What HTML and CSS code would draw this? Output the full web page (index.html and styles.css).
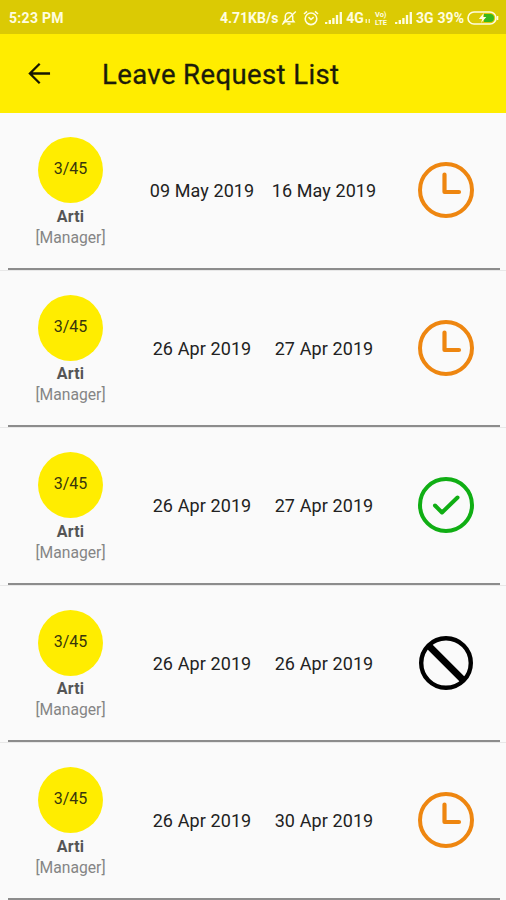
FILE: index.html
```html
<!DOCTYPE html>
<html lang="en">
<head>
    <meta charset="UTF-8">
    <meta name="viewport" content="width=device-width, initial-scale=1.0">
    <title>Leave Request List</title>
    <link rel="stylesheet" href="styles.css">
</head>
<body>
    <!-- Shared icons -->
    <svg class="sprite" width="0" height="0">
        <symbol id="pending" viewBox="0 0 56 56">
            <circle cx="28" cy="28" r="26" fill="none" stroke="#ee8610" stroke-width="4"/>
            <path d="M26.5 12.5V30H41" fill="none" stroke="#ee8610" stroke-width="4.2" stroke-linecap="round" stroke-linejoin="round"/>
        </symbol>
        <symbol id="approved" viewBox="0 0 56 56">
            <circle cx="28" cy="28" r="26" fill="none" stroke="#10ae14" stroke-width="4"/>
            <path d="M17 28.5L24 35.5L39.5 20.5" fill="none" stroke="#10ae14" stroke-width="4" stroke-linecap="round" stroke-linejoin="round"/>
        </symbol>
        <symbol id="rejected" viewBox="0 0 56 56">
            <circle cx="28" cy="28" r="24.8" fill="none" stroke="#000" stroke-width="4.4"/>
            <path d="M11 11L45 45" stroke="#000" stroke-width="6.8"/>
        </symbol>
        <symbol id="signal" viewBox="0 0 18 14">
            <path d="M1.2 11v2M4.8 9v4M8.4 7v6M12 4v9M15.8 1v12" stroke="#fffde0" stroke-width="2.3"/>
        </symbol>
    </svg>

    <div class="status-bar">
        <span class="time">5:23 PM</span>
        <div class="indicators">
            <span class="speed">4.71KB/s</span>
            <svg class="bell" viewBox="0 0 16 16" fill="none" stroke="#fffde0" stroke-width="1.5">
                <path d="M3 11.8L4.3 10V6.5a3.7 3.7 0 0 1 7.4 0V10L13 11.8zM6.5 14h3M1.2 14.5L14.8 1.5"/>
            </svg>
            <svg class="alarm" viewBox="0 0 16 16" fill="none" stroke="#fffde0" stroke-width="1.6">
                <circle cx="8" cy="8.8" r="5.8"/>
                <path d="M1 4L4 1.3M15 4L12 1.3M5.5 7.2L8 9.5L10.7 7.2"/>
            </svg>
            <svg class="signal"><use href="#signal"/></svg>
            <span class="network-4g">4G</span>
            <svg class="data" viewBox="0 0 6 6"><path d="M1.2 1v4M4.2 1v4" stroke="#fffde0" stroke-width="1.2"/></svg>
            <span class="volte"><span>Vo)</span><span>LTE</span></span>
            <svg class="signal second"><use href="#signal"/></svg>
            <span class="network-3g">3G</span>
            <span class="percent">39%</span>
            <svg class="battery" viewBox="0 0 32 14">
                <rect x="1" y="1" width="28" height="12" rx="6" fill="none" stroke="#fffde0" stroke-width="1.6"/>
                <path d="M17 3h6a4 4 0 0 1 0 8h-6z" fill="#38b81c"/>
                <path d="M16.8 2L11.8 8h3.5L14 12l5.3-6H16z" fill="#fffde0"/>
                <path d="M30.5 5v4" stroke="#fffde0" stroke-width="1.6"/>
            </svg>
        </div>
    </div>

    <header class="toolbar">
        <svg class="back" viewBox="0 0 24 24" fill="none" stroke="#171700" stroke-width="2.4">
            <path d="M23 12H2.5M12.2 1.8L2 12L12.2 22.2"/>
        </svg>
        <h1>Leave Request List</h1>
    </header>

    <main class="list">
        <div class="row">
            <div class="person">
                <div class="badge">3/45</div>
                <div class="name">Arti</div>
                <div class="role">[Manager]</div>
            </div>
            <div class="date">09 May 2019</div>
            <div class="date">16 May 2019</div>
            <svg class="state"><use href="#pending"/></svg>
        </div>
        <div class="row">
            <div class="person">
                <div class="badge">3/45</div>
                <div class="name">Arti</div>
                <div class="role">[Manager]</div>
            </div>
            <div class="date">26 Apr 2019</div>
            <div class="date">27 Apr 2019</div>
            <svg class="state"><use href="#pending"/></svg>
        </div>
        <div class="row">
            <div class="person">
                <div class="badge">3/45</div>
                <div class="name">Arti</div>
                <div class="role">[Manager]</div>
            </div>
            <div class="date">26 Apr 2019</div>
            <div class="date">27 Apr 2019</div>
            <svg class="state"><use href="#approved"/></svg>
        </div>
        <div class="row">
            <div class="person">
                <div class="badge">3/45</div>
                <div class="name">Arti</div>
                <div class="role">[Manager]</div>
            </div>
            <div class="date">26 Apr 2019</div>
            <div class="date">26 Apr 2019</div>
            <svg class="state"><use href="#rejected"/></svg>
        </div>
        <div class="row">
            <div class="person">
                <div class="badge">3/45</div>
                <div class="name">Arti</div>
                <div class="role">[Manager]</div>
            </div>
            <div class="date">26 Apr 2019</div>
            <div class="date">30 Apr 2019</div>
            <svg class="state"><use href="#pending"/></svg>
        </div>
    </main>
</body>
</html>
```
FILE: styles.css
```css
* {
    box-sizing: border-box;
}
body {
    margin: 0;
    height: 900px;
    overflow: hidden;
    background-color: #fafafa;
    font-family: Roboto, "Liberation Sans", sans-serif;
}
svg {
    display: block;
    flex: none;
}
.sprite {
    position: absolute;
}
.status-bar {
    display: flex;
    justify-content: space-between;
    align-items: center;
    height: 34px;
    padding: 2px 7px 0 9px;
    background-color: #dbca04;
    color: #fffde0;
    font-size: 14px;
    font-weight: 700;
    white-space: nowrap;
}
.time {
    letter-spacing: 0.3px;
}
.indicators {
    display: flex;
    align-items: center;
}
.bell {
    width: 16px;
    height: 16px;
    margin-left: 3px;
}
.alarm {
    width: 16px;
    height: 16px;
    margin-left: 6px;
}
.signal {
    width: 18px;
    height: 14px;
    margin-left: 6px;
}
.network-4g {
    margin-left: 3px;
}
.data {
    width: 6px;
    height: 6px;
    margin: 6px 0 0 1px;
}
.volte {
    display: flex;
    flex-direction: column;
    gap: 1px;
    margin-left: 4px;
    font-size: 7.5px;
    line-height: 8px;
}
.volte span {
    height: 7px;
    line-height: 7px;
}
.second {
    margin-left: 8px;
}
.network-3g {
    margin-left: 3px;
}
.percent {
    margin-left: 4px;
}
.battery {
    width: 32px;
    height: 14px;
    margin-left: 3px;
}
.toolbar {
    display: flex;
    align-items: center;
    height: 79px;
    padding-left: 28px;
    background-color: #ffed00;
}
.back {
    width: 23px;
    height: 23px;
}
h1 {
    margin: 3px 0 0 51px;
    color: #1c1c0a;
    font-size: 27.5px;
    font-weight: 400;
    line-height: 32px;
    letter-spacing: 0.4px;
    -webkit-text-stroke: 0.3px #1c1c0a;
    white-space: nowrap;
}
.row {
    display: grid;
    grid-template-columns: 141px 122px 122px 121px;
    align-items: center;
    height: 157.5px;
    border-bottom: 1px solid #e8e8e8;
    /* inset divider above the full width border */
    background: linear-gradient(#8c8c8c, #8c8c8c) 8px 100% / 492px 2px no-repeat;
}
.person {
    display: flex;
    flex-direction: column;
    align-items: center;
    align-self: start;
    padding-top: 24px;
}
.badge {
    width: 65px;
    height: 66px;
    border-radius: 50%;
    background-color: #ffed00;
    color: #38360c;
    font-size: 16px;
    line-height: 64px;
    text-align: center;
}
.name {
    margin-top: 2.5px;
    color: #555;
    font-size: 16px;
    font-weight: 700;
    line-height: 21px;
    letter-spacing: 0.2px;
}
.role {
    color: #858585;
    font-size: 15.7px;
    line-height: 22px;
}
.date {
    color: #222;
    font-size: 18px;
    line-height: 22px;
    letter-spacing: 0.1px;
    text-align: center;
    white-space: nowrap;
}
.state {
    width: 56px;
    height: 56px;
    justify-self: center;
    margin-bottom: 2px;
}
```
